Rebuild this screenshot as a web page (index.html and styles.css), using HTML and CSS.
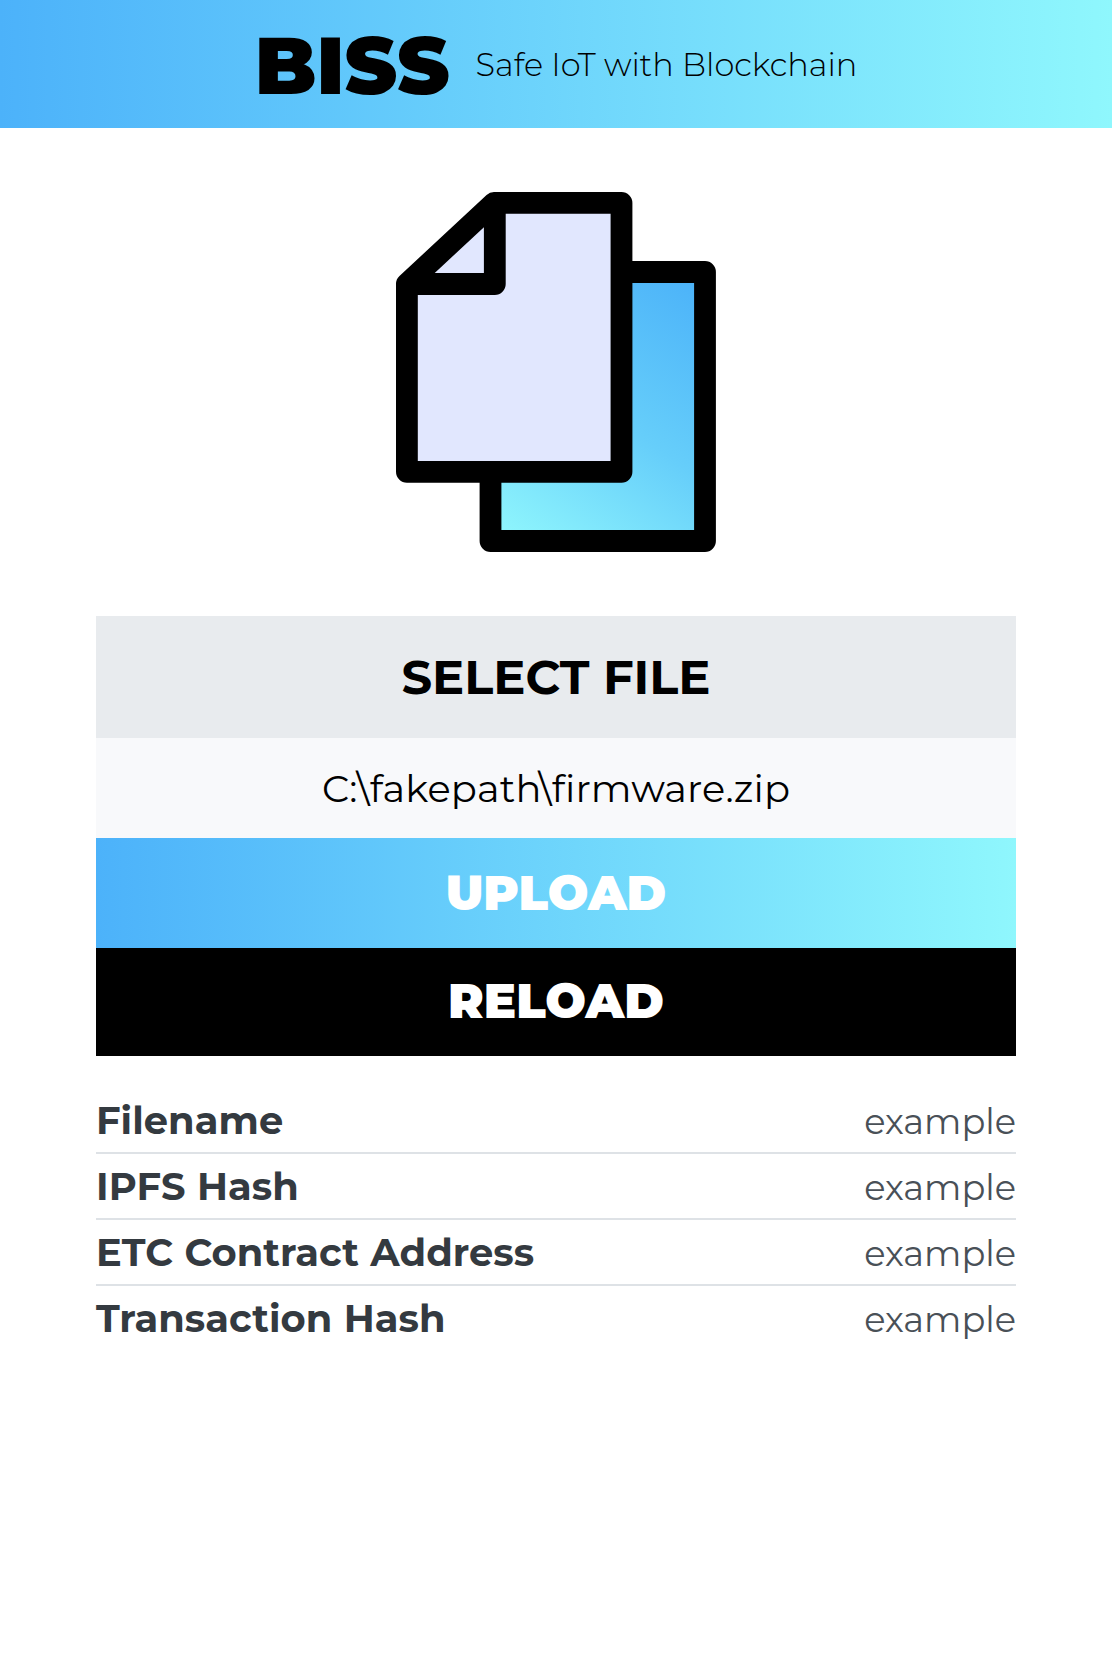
FILE: index.html
```html
<!DOCTYPE html>
<html lang="en">
<head>
  <meta charset="utf-8">
  <title>BISS</title>
  <link rel="stylesheet" href="styles.css">
</head>
<body>
  <header class="header">
    <h1 class="brand">BISS</h1>
    <p class="tagline">Safe IoT with Blockchain</p>
  </header>
  <main class="main">
    <svg class="files-icon" viewBox="0 0 320 360" width="320" height="360" aria-hidden="true">
      <defs>
        <linearGradient id="sheet" gradientUnits="userSpaceOnUse" x1="303" y1="92" x2="122" y2="355">
          <stop offset="0" stop-color="#4cb3f9"/>
          <stop offset="0.5" stop-color="#66cefa"/>
          <stop offset="1" stop-color="#8ff6fd"/>
        </linearGradient>
      </defs>
      <g stroke="#000" stroke-width="21.8" stroke-linejoin="round">
        <path fill="url(#sheet)" d="M94.5 80H309V349H94.5Z"/>
        <path fill="#e1e7fe" d="M98 10.9H225.5V279.8H10.9V92Z"/>
        <path fill="none" d="M98.8 10.9V92H10.9"/>
      </g>
    </svg>
    <section class="actions">
      <label class="select">SELECT FILE</label>
      <div class="path">C:\fakepath\firmware.zip</div>
      <button class="button upload">UPLOAD</button>
      <button class="button reload">RELOAD</button>
    </section>
    <dl class="details">
      <div class="row"><dt class="key">Filename</dt><dd class="value">example</dd></div>
      <div class="row"><dt class="key">IPFS Hash</dt><dd class="value">example</dd></div>
      <div class="row"><dt class="key">ETC Contract Address</dt><dd class="value">example</dd></div>
      <div class="row"><dt class="key">Transaction Hash</dt><dd class="value">example</dd></div>
    </dl>
  </main>
</body>
</html>
```
FILE: styles.css
```css
* { box-sizing: border-box; }

body {
  margin: 0;
  background: #fff;
  color: #000;
  font-family: Montserrat, Inter, sans-serif;
}

h1, p, dl, dt, dd { margin: 0; }

.header {
  display: flex;
  align-items: center;
  justify-content: center;
  gap: 26px;
  height: 128px;
  background: linear-gradient(90deg, #4cb2fa, #8ff7fd);
}

.brand {
  padding-top: 3px;
  font-size: 80px;
  font-weight: 900;
}

.tagline {
  font-size: 32px;
  font-weight: 300;
  white-space: nowrap;
}

.main {
  display: flex;
  flex-direction: column;
  padding: 64px 96px;
}

.files-icon {
  align-self: center;
  margin-bottom: 64px;
}

.actions {
  display: flex;
  flex-direction: column;
}

.select,
.path,
.button {
  display: flex;
  align-items: center;
  justify-content: center;
  white-space: nowrap;
}

.select {
  height: 122px;
  background: #e8ebee;
  font-size: 48px;
  font-weight: 700;
}

.path {
  height: 100px;
  background: #f8f9fb;
  font-size: 38.4px;
  font-weight: 400;
  font-variant-ligatures: none;
  letter-spacing: 0.13px;
}

.button {
  padding: 0;
  border: 0;
  color: #fff;
  font-family: inherit;
  font-size: 48px;
  font-weight: 900;
}

.upload {
  height: 110px;
  background: linear-gradient(90deg, #4cb2fa, #8ff7fd);
}

.reload {
  height: 108px;
  padding-bottom: 2px;
  background: #000;
}

.details { padding-top: 32px; }

.row {
  display: flex;
  align-items: baseline;
  justify-content: space-between;
  height: 66px;
  padding-top: 1px;
  border-bottom: 2px solid #dee2e6;
  line-height: 63px;
}

.row:last-child { border-bottom: 0; }

.key {
  color: #343a40;
  font-size: 38.4px;
  font-weight: 700;
  letter-spacing: 0.06px;
  word-spacing: 0.4px;
}

.value {
  color: #495057;
  font-size: 35.2px;
  font-weight: 400;
}
```
